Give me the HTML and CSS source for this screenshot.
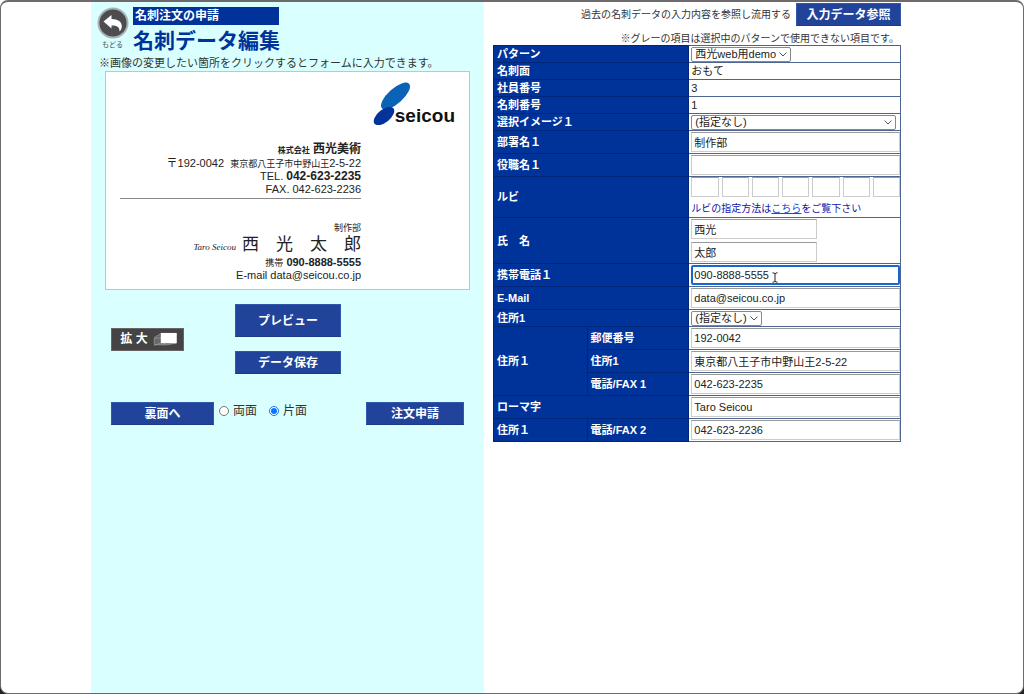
FILE: index.html
```html
<!DOCTYPE html>
<html lang="ja">
<head>
<meta charset="utf-8">
<title>名刺データ編集</title>
<link rel="stylesheet" href="styles.css">
</head>
<body>
<div class="page">
  <main class="layout">
    <section class="editor">
      <header class="head">
        <a class="back" href="#">
          <svg class="back-icon" viewBox="0 0 32 32" aria-hidden="true">
            <circle cx="16" cy="16" r="15.5" fill="#a9b3b5"/>
            <circle cx="16" cy="16" r="13.6" fill="#4d4d4f"/>
            <path d="M6.500 14.500L14.500 8v4c6.500 0 10.500 2.800 10.300 7.600 0 2-.9 3.700-2.300 4.900.2-4.200-2.100-6-8-6V21.500z" fill="#fff"/>
          </svg>
          <span>もどる</span>
        </a>
        <div class="titles">
          <p class="subtitle">名刺注文の申請</p>
          <h1 class="title">名刺データ編集</h1>
        </div>
      </header>
      <p class="hint">※画像の変更したい箇所をクリックするとフォームに入力できます。</p>

      <article class="card">
        <div class="logo">
          <svg class="logo-mark" viewBox="0 0 38 43" aria-hidden="true">
            <ellipse cx="22.500" cy="14" rx="18.300" ry="7.500" transform="rotate(-42 22.500 14)" fill="#0a63b5"/>
            <ellipse cx="11" cy="34" rx="12.200" ry="6.300" transform="rotate(-39 11 34)" fill="#04349a"/>
          </svg>
          <span class="logo-text">seicou</span>
        </div>
        <div class="company">
          <p class="company-name"><small>株式会社</small> <b>西光美術</b></p>
          <p class="address">〒192-0042&nbsp; <span>東京都八王子市中野山王</span>2-5-22</p>
          <p class="tel">TEL. <b>042-623-2235</b></p>
          <p class="fax">FAX. 042-623-2236</p>
        </div>
        <div class="person">
          <p class="dept">制作部</p>
          <p class="name"><i>Taro Seicou</i><span>西　光　太　郎</span></p>
          <p class="mobile"><small>携帯</small> <b>090-8888-5555</b></p>
          <p class="mail">E-mail data@seicou.co.jp</p>
        </div>
      </article>

      <div class="actions">
        <button class="zoom" type="button">拡 大
          <svg class="zoom-icon" viewBox="0 0 26 16" aria-hidden="true">
            <path d="M1 6L7 2H24.500V12L12 14H1z" fill="#686868"/>
            <path d="M1 6L8 1.500M1 14L8 12M12 14L24 12M1 6.500h11v7H1z" fill="none" stroke="#999" stroke-width=".8"/>
            <rect x="8" y="1" width="17" height="11" fill="#fff"/>
          </svg>
        </button>
        <div class="stack">
          <button class="btn tall" type="button">プレビュー</button>
          <button class="btn" type="button">データ保存</button>
        </div>
      </div>
      <div class="submit">
        <button class="btn flip" type="button">裏面へ</button>
        <div class="sides">
          <label><input type="radio" name="side">両面</label>
          <label><input type="radio" name="side" checked>片面</label>
        </div>
        <button class="btn apply" type="button">注文申請</button>
      </div>
    </section>

    <section class="form">
      <div class="reuse"><span>過去の名刺データの入力内容を参照し流用する</span><button class="btn refer" type="button">入力データ参照</button></div>
      <p class="note">※グレーの項目は選択中のパターンで使用できない項目です。</p>
      <table class="fields">
        <colgroup><col class="c1"><col class="c2"><col class="c3"></colgroup>
        <tbody>
          <tr class="r-text"><th colspan="2"><label for="pattern">パターン</label></th><td><select id="pattern"><option>西光web用demo</option></select></td></tr>
          <tr class="r-text"><th colspan="2">名刺面</th><td>おもて</td></tr>
          <tr class="r-text"><th colspan="2">社員番号</th><td>3</td></tr>
          <tr class="r-text"><th colspan="2">名刺番号</th><td>1</td></tr>
          <tr class="r-text"><th colspan="2"><label for="image">選択イメージ１</label></th><td><select id="image" class="wide"><option>(指定なし)</option></select></td></tr>
          <tr class="r-input"><th colspan="2"><label for="dept">部署名１</label></th><td><input id="dept" type="text" value="制作部"></td></tr>
          <tr class="r-input"><th colspan="2"><label for="post">役職名１</label></th><td><input id="post" type="text"></td></tr>
          <tr class="r-ruby"><th colspan="2">ルビ</th><td>
            <div class="ruby">
              <input type="text" aria-label="ルビ 1"><input type="text" aria-label="ルビ 2"><input type="text" aria-label="ルビ 3"><input type="text" aria-label="ルビ 4"><input type="text" aria-label="ルビ 5"><input type="text" aria-label="ルビ 6"><input type="text" aria-label="ルビ 7">
            </div>
            <p class="ruby-help">ルビの指定方法は<a href="#">こちら</a>をご覧下さい</p>
          </td></tr>
          <tr class="r-name"><th colspan="2">氏　名</th><td><div class="names"><input type="text" aria-label="氏" value="西光"><input type="text" aria-label="名" value="太郎"></div></td></tr>
          <tr class="r-input"><th colspan="2"><label for="mobile">携帯電話１</label></th><td><div class="active">
            <input id="mobile" type="text" value="090-8888-5555">
            <svg class="ibeam" viewBox="0 0 6 11" aria-hidden="true"><path d="M.500.800Q3 .800 3 2V9Q3 10.200.500 10.200M5.500.800Q3 .800 3 2M3 9Q3 10.200 5.500 10.200" fill="none" stroke="#222" stroke-width="1"/></svg>
          </div></td></tr>
          <tr class="r-input"><th colspan="2"><label for="email">E-Mail</label></th><td><input id="email" type="text" value="data@seicou.co.jp"></td></tr>
          <tr class="r-text"><th colspan="2"><label for="addr-kind">住所1</label></th><td><select id="addr-kind"><option>(指定なし)</option></select></td></tr>
          <tr class="r-input"><th rowspan="3">住所１</th><th><label for="zip">郵便番号</label></th><td><input id="zip" type="text" value="192-0042"></td></tr>
          <tr class="r-input"><th><label for="addr">住所1</label></th><td><input id="addr" type="text" value="東京都八王子市中野山王2-5-22"></td></tr>
          <tr class="r-input"><th><label for="fax1">電話/FAX 1</label></th><td><input id="fax1" type="text" value="042-623-2235"></td></tr>
          <tr class="r-input"><th colspan="2"><label for="roman">ローマ字</label></th><td><input id="roman" type="text" value="Taro Seicou"></td></tr>
          <tr class="r-input"><th>住所１</th><th><label for="fax2">電話/FAX 2</label></th><td><input id="fax2" type="text" value="042-623-2236"></td></tr>
        </tbody>
      </table>
    </section>
  </main>
</div>
</body>
</html>
```

FILE: styles.css
```css
* { box-sizing: border-box; }
html { background: linear-gradient(#fff 50%, #222 50%); }
body {
  margin: 0;
  color: #333;
  font-family: "Liberation Sans", "Noto Sans CJK JP", sans-serif;
  font-size: 11px;
  line-height: 14px;
}
p, h1 { margin: 0; }
button, input, select { font: inherit; margin: 0; }

.page {
  display: flex;
  min-height: 100vh;
  border: 1px solid #6e696b;
  border-top-width: 2px;
  border-radius: 8px;
  background: #fff;
  overflow: hidden;
}
.layout {
  display: grid;
  grid-template-columns: 393fr 408fr;
  column-gap: 9px;
  width: 100%;
  max-width: 842px;
  margin: 0 auto;
  padding-right: 32px;
}

/* Editor column */
.editor { background: #d9ffff; padding: 5px 0 0; }
.head { display: flex; padding-left: 5px; gap: 4px; }
.back {
  display: flex;
  flex-direction: column;
  align-items: center;
  width: 33px;
  color: #555;
  font-size: 7px;
  line-height: 12px;
  text-decoration: none;
}
.back-icon { width: 32px; height: 32px; }
.titles { width: 146px; }
.subtitle {
  padding: 0 2px;
  background: #039;
  color: #fff;
  font-size: 12px;
  font-weight: bold;
  line-height: 18px;
}
.title {
  color: #039;
  font-size: 21px;
  font-weight: bold;
  line-height: 31px;
  white-space: nowrap;
}
.hint { padding-left: 8px; line-height: 15px; white-space: nowrap; }

/* Business card */
.card {
  margin: 0 14px;
  padding: 10px 108px 7px 14px;
  border: 1px solid #c4c4c8;
  background: #fff;
  color: #222;
  text-align: right;
}
.card p { height: 13px; white-space: nowrap; }
.card small { font-size: 9px; }
.logo {
  display: flex;
  align-items: flex-end;
  margin-right: -94px;
  justify-content: flex-end;
}
.logo-mark { width: 38px; height: 43px; }
.logo-text {
  margin-left: -16px;
  color: #111;
  font-size: 19px;
  font-weight: bold;
  line-height: 19px;
}
.company { padding: 16px 0 2px; border-bottom: 1px solid #888; line-height: 13px; }
.card .company-name { height: 16px; line-height: 16px; font-size: 12px; }
.company-name small { font-weight: bold; font-size: 8px; }
.address span { font-size: 9px; }
.tel b { font-size: 12px; }
.person { padding-top: 23px; line-height: 13px; }
.dept { font-size: 9px; }
.card .name { display: flex; justify-content: flex-end; align-items: baseline; gap: 6px; height: 21px; line-height: 20px; }
.name i { font: italic 9px/20px "Liberation Serif", serif; }
.name span { font-size: 17px; }

/* Buttons */
.btn, .zoom {
  border: 1px solid #2f58aa;
  border-bottom-color: #193a85;
  background: #21439a;
  color: #fff;
  font-size: 12px;
  font-weight: bold;
  line-height: 20px;
  height: 23px;
  padding: 0;
  white-space: nowrap;
}
.btn.tall { height: 33px; }
.actions { display: flex; align-items: center; gap: 51px; padding: 14px 20px 0; }
.zoom {
  display: flex;
  align-items: center;
  justify-content: center;
  gap: 5px;
  width: 73px;
  padding-left: 3px;
  border-color: #666;
  background: #444;
}
.zoom-icon { width: 25px; height: 15px; }
.stack { display: flex; flex-direction: column; gap: 14px; width: 106px; }
.submit { display: flex; padding: 28px 20px 0; }
.flip { width: 103px; }
.apply { width: 98px; margin-left: auto; }
.sides { display: flex; gap: 12px; padding-left: 5px; font-size: 12px; line-height: 18px; }
.sides label { display: flex; align-items: center; gap: 4px; height: 18px; }
.sides input { width: 10px; height: 10px; accent-color: #0a75ff; }

/* Form column */
.form { min-width: 0; }
.reuse {
  display: flex;
  justify-content: flex-end;
  align-items: center;
  gap: 5px;
  padding-top: 1px;
  font-size: 10px;
}
.refer { width: 105px; }
.note { padding: 6px 2px 0 0; font-size: 10px; line-height: 13px; text-align: right; }
.fields {
  width: 100%;
  table-layout: fixed;
  border-collapse: collapse;
  line-height: 14px;
}
.c1 { width: 23%; }
.c2 { width: 25%; }
.fields th {
  padding: 0 3px;
  border: 1px solid #00267c;
  background: #039;
  color: #fff;
  font-weight: bold;
  text-align: left;
}
.fields td { padding: 0 0 0 2px; border: 1px solid #4d6390; color: #222; }
.r-text { height: 17px; }
.r-input { height: 23px; }
.r-ruby { height: 41px; }
.r-name { height: 46px; }

.fields input {
  display: block;
  width: 100%;
  height: 20px;
  padding: 0 2px;
  border: 1px solid #ccc;
  border-top-color: #999;
  background: #fff;
  color: #222;
}
.fields select {
  display: block;
  appearance: none;
  height: 15px;
  padding: 0 14px 0 3px;
  border: 1px solid #888;
  border-radius: 2px;
  background: #fff url("data:image/svg+xml,%3Csvg xmlns='http://www.w3.org/2000/svg' width='8' height='5'%3E%3Cpath d='M.5.5L4 4L7.500.5' fill='none' stroke='%23555'/%3E%3C/svg%3E") no-repeat right 3px center;
  color: #222;
  line-height: 13px;
}
.fields select.wide { width: 98%; }
.ruby { display: flex; gap: 3px; }
.fields .ruby input { flex: 1; min-width: 0; }
.ruby-help { padding-top: 4px; color: #11a; font-size: 10px; line-height: 16px; }
.ruby-help a { color: #0b50d8; }
.names { display: grid; gap: 3px; width: 60%; }
.active { position: relative; }
.fields .active input { border: 2px solid #1767d2; border-radius: 2px; padding: 0 1px; }
.ibeam { position: absolute; left: 81px; top: 7px; width: 6px; height: 11px; }
```
